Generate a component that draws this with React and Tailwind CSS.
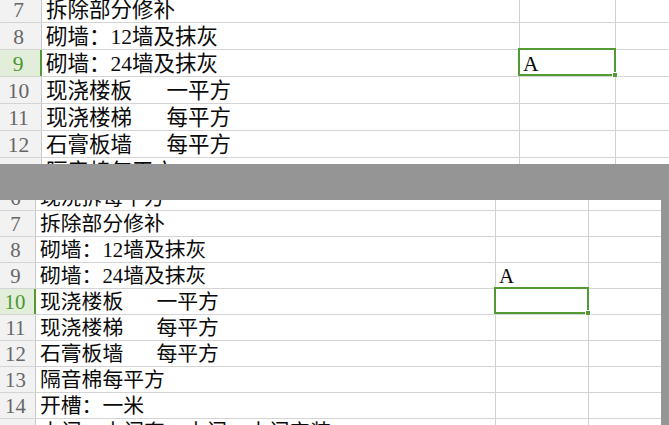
const topRows = [
  { n: 7, a: "拆除部分修补" },
  { n: 8, a: "砌墙：12墙及抹灰" },
  { n: 9, a: "砌墙：24墙及抹灰", sel: true, c: "A", cSel: true },
  { n: 10, a: "现浇楼板", b: "一平方" },
  { n: 11, a: "现浇楼梯", b: "每平方" },
  { n: 12, a: "石膏板墙", b: "每平方" },
  { n: 13, a: "隔音棉每平方" },
];

const bottomRows = [
  { n: 6, a: "现浇拆每平方" },
  { n: 7, a: "拆除部分修补" },
  { n: 8, a: "砌墙：12墙及抹灰" },
  { n: 9, a: "砌墙：24墙及抹灰", c: "A" },
  { n: 10, a: "现浇楼板", b: "一平方", sel: true, cSel: true },
  { n: 11, a: "现浇楼梯", b: "每平方" },
  { n: 12, a: "石膏板墙", b: "每平方" },
  { n: 13, a: "隔音棉每平方" },
  { n: 14, a: "开槽：一米" },
  { n: 15, a: "木门：木门套一木门：木门安装" },
];

function Row({ r, big }) {
  const h = big ? "h-[27px]" : "h-[26px]";
  const fs = big ? "text-[21.5px]" : "text-[20.8px]";
  return (
    <div className={`flex shrink-0 ${h} border-b border-[#d4d4d4]`}>
      <div
        className={`${big ? "w-[42px] pr-1" : "w-[36px] pr-1"} shrink-0 flex items-end justify-center pb-[1px] leading-none ${fs} ${
          r.sel
            ? "bg-[#e2eeda] text-[#4a9730] border-r-2 border-[#529a32]"
            : "bg-[#f2f2f2] text-[#666666] border-r border-[#c8c8c8]"
        }`}
      >
        {r.n}
      </div>
      <div
        className={`${big ? "w-[478px]" : "w-[460px]"} shrink-0 flex items-end pl-1 pb-[1px] leading-none whitespace-nowrap overflow-hidden text-[#0a0a0a] ${fs} border-r border-[#d0d0d0]`}
      >
        <span>{r.a}</span>
        {r.b && <span className="ml-[1.6em]">{r.b}</span>}
      </div>
      <div
        className={`${big ? "w-[96px]" : "w-[93px]"} shrink-0 relative flex items-end pl-[3px] pb-[1px] leading-none text-[#0a0a0a] ${fs} border-r border-[#d0d0d0]`}
      >
        {r.c}
        {r.cSel && (
          <div className="absolute left-[-2px] top-[-2px] right-[-1px] bottom-[0px] border-2 border-[#529a32]">
            <div className="absolute right-[-4px] bottom-[-4px] w-[6px] h-[6px] bg-[#529a32] border border-white" />
          </div>
        )}
      </div>
      <div className="flex-1" />
    </div>
  );
}

export default function App() {
  return (
    <div className="w-[669px] h-[425px] overflow-hidden bg-[#959595] flex flex-col font-['Liberation_Serif','Noto_Sans_CJK_SC',serif]">
      {/* first capture */}
      <div className="h-[164px] shrink-0 overflow-hidden bg-white">
        <div className="flex flex-col -mt-[4px]">
          {topRows.map((r) => (
            <Row key={r.n} r={r} big />
          ))}
        </div>
      </div>

      {/* gap between the two captures */}
      <div className="h-[36px] shrink-0 bg-[#959595]" />

      {/* second capture */}
      <div className="h-[225px] shrink-0 flex">
        <div className="w-[661px] h-full overflow-hidden bg-white">
          <div className="flex flex-col -mt-[15px]">
            {bottomRows.map((r) => (
              <Row key={r.n} r={r} />
            ))}
          </div>
        </div>
        <div className="flex-1 bg-[#959595]" />
      </div>
    </div>
  );
}
